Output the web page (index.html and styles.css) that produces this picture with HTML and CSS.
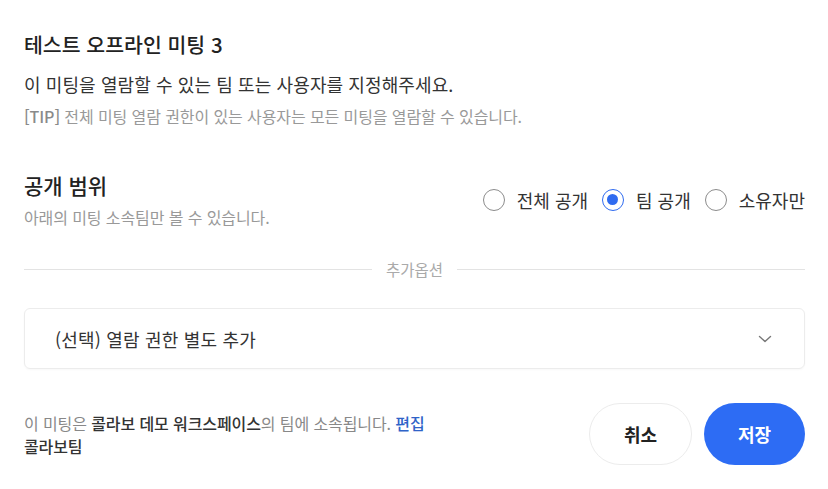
FILE: index.html
```html
<!DOCTYPE html>
<html lang="ko">
<head>
  <meta charset="UTF-8" />
  <title>열람 권한 설정</title>
  <link rel="stylesheet" href="styles.css">
</head>
<body>
  <div class="dialog">
    <!-- 상단 안내 -->
    <header class="head">
      <h1>테스트 오프라인 미팅 3</h1>
      <p class="desc">이 미팅을 열람할 수 있는 팀 또는 사용자를 지정해주세요.</p>
      <p class="tip"><b>[TIP]</b> 전체 미팅 열람 권한이 있는 사용자는 모든 미팅을 열람할 수 있습니다.</p>
    </header>

    <!-- 공개 범위 -->
    <section class="scope">
      <div class="scope-text">
        <h2>공개 범위</h2>
        <p>아래의 미팅 소속팀만 볼 수 있습니다.</p>
      </div>
      <div class="radios">
        <label class="radio"><span class="dot"></span>전체 공개</label>
        <label class="radio checked"><span class="dot"></span>팀 공개</label>
        <label class="radio"><span class="dot"></span>소유자만</label>
      </div>
    </section>

    <div class="divider"><span>추가옵션</span></div>

    <div class="select">
      <span>(선택) 열람 권한 별도 추가</span>
      <svg class="chev" width="14" height="14" viewBox="0 0 14 14"><path d="M1.5 4.5 L7 9.5 L12.5 4.5" fill="none" stroke="#777" stroke-width="1.4" stroke-linecap="round" stroke-linejoin="round"/></svg>
    </div>

    <footer class="foot">
      <div class="foot-text">
        <p>이 미팅은 <strong>콜라보 데모 워크스페이스</strong>의 팀에 소속됩니다. <a href="#">편집</a></p>
        <p class="team">콜라보팀</p>
      </div>
      <div class="btns">
        <button class="btn cancel">취소</button>
        <button class="btn save">저장</button>
      </div>
    </footer>
  </div>
</body>
</html>
```

FILE: styles.css
```css
*{margin:0;padding:0;box-sizing:border-box}
body{
  font-family:'Noto Sans CJK KR','Noto Sans',sans-serif;
  background:#fff;
  color:#222;
  width:828px;
}
.dialog{padding:30px 23px 0 24px}

.head h1{font-size:20.5px;line-height:28px;font-weight:500;color:#222}
.head .desc{margin-top:14px;font-size:18px;line-height:24px;color:#333;letter-spacing:.1px}
.head .tip{margin-top:10px;font-size:16px;line-height:20px;color:#999;letter-spacing:-.1px}
.head .tip b{font-weight:500;color:#8a8a8a}

.scope{margin-top:46px;display:flex;justify-content:space-between;align-items:center}
.scope h2{font-size:21px;line-height:26px;font-weight:500;color:#222}
.scope-text p{margin-top:9px;font-size:16px;line-height:20px;color:#999;letter-spacing:-.1px}

.radios{display:flex;gap:14px;align-items:center}
.radio{display:flex;align-items:center;gap:12px;font-size:18px;line-height:24px;color:#333;cursor:pointer}
.dot{width:22px;height:22px;border-radius:50%;border:1.5px solid #8c8c8c;position:relative}
.radio.checked .dot{border-color:#2f6bf0}
.radio.checked .dot::after{content:'';position:absolute;left:4px;top:4px;width:11px;height:11px;border-radius:50%;background:#2f6bf0}

.divider{margin-top:32px;display:flex;align-items:center;gap:14px;font-size:15.5px;line-height:20px;color:#aaa}
.divider::before,.divider::after{content:'';flex:1;height:1px;background:#e3e3e3}

.select{margin-top:29px;height:61px;border:1px solid #ececec;border-radius:6px;display:flex;align-items:center;justify-content:space-between;padding:0 32px 0 30px;font-size:18px;color:#333;letter-spacing:.2px;box-shadow:0 1px 2px rgba(0,0,0,.03)}
.chev{margin-top:1px}

.foot{margin-top:34px;display:flex;justify-content:space-between;align-items:center}
.foot-text p{font-size:16px;line-height:22px;color:#888;letter-spacing:-.1px}
.foot-text strong{font-weight:500;color:#333}
.foot-text a{color:#2f63c8;text-decoration:none;font-weight:500}
.foot-text .team{margin-top:1px;color:#333;font-weight:500}

.btns{display:flex;gap:12px}
.btn{height:62px;border-radius:31px;font-family:inherit;font-size:18px;font-weight:700;cursor:pointer}
.cancel{width:103px;background:#fff;border:1px solid #ececec;color:#222}
.save{width:101px;background:#2d6cf4;border:none;color:#fff}
```
